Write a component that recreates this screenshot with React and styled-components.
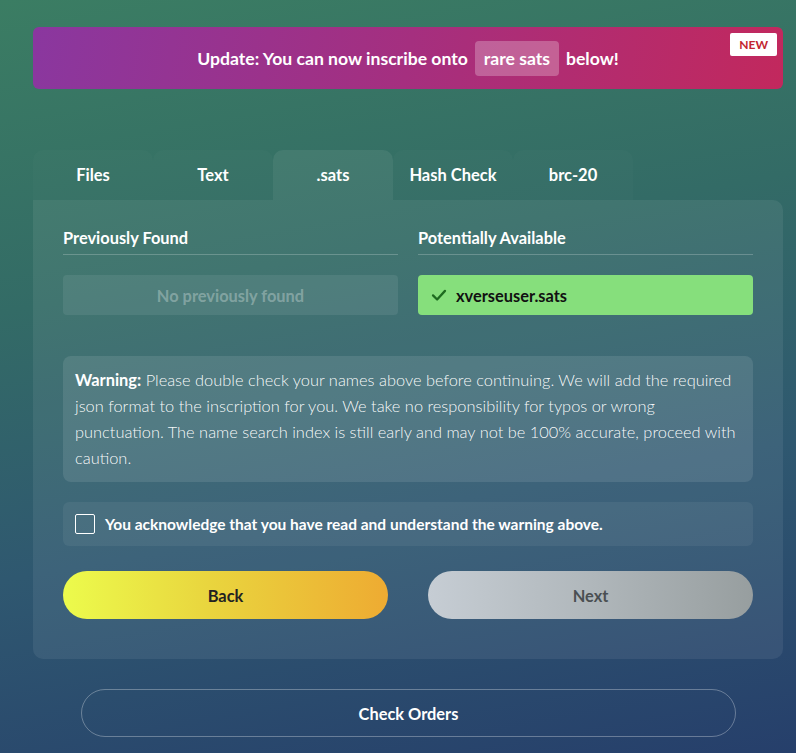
import React from 'react';
import styled, { createGlobalStyle } from 'styled-components';

const GlobalStyle = createGlobalStyle`
	html, body {
		margin: 0;
		padding: 0;
		height: 100%;
	}
	body {
		font-family: Lato, 'Noto Sans', sans-serif;
		background: linear-gradient(170deg, #3b7d63 0%, #336b66 35%, #2f5870 65%, #263f6b 100%);
		color: white;
	}
`;

const Page = styled.div`
	width: 796px;
	height: 753px;
	box-sizing: border-box;
	padding: 27px 13px 0 33px;
	display: flex;
	flex-direction: column;
`;

const Banner = styled.div`
	position: relative;
	height: 62px;
	border-radius: 6px;
	background: linear-gradient(100deg, #8a379f 0%, #a52f7f 50%, #c2285d 100%);
	display: flex;
	align-items: center;
	justify-content: center;
	gap: 7px;
	font-size: 17.6px;
	font-weight: 700;
`;

const Pill = styled.span`
	background: rgba(255, 255, 255, 0.25);
	border-radius: 4px;
	padding: 7px 9px;
`;

const NewBadge = styled.span`
	position: absolute;
	top: 6px;
	right: 6px;
	background: white;
	color: #c3262f;
	font-size: 12px;
	font-weight: 700;
	padding: 4px 9px;
	border-radius: 2px;
`;

const Tabs = styled.div`
	display: flex;
	margin-top: 61px;
`;

const Tab = styled.div`
	width: 120px;
	height: 50px;
	display: flex;
	align-items: center;
	justify-content: center;
	font-size: 16.5px;
	font-weight: 700;
	border-radius: 10px 10px 0 0;
	background: ${(p) => (p.$active ? 'rgba(255,255,255,0.07)' : 'rgba(255,255,255,0.015)')};
`;

const Panel = styled.div`
	background: rgba(255, 255, 255, 0.07);
	border-radius: 0 10px 10px 10px;
	padding: 28px 30px 40px;
	display: flex;
	flex-direction: column;
`;

const Columns = styled.div`
	display: grid;
	grid-template-columns: 1fr 1fr;
	gap: 20px;
`;

const Column = styled.div`
	display: flex;
	flex-direction: column;
`;

const ColTitle = styled.div`
	font-size: 16.4px;
	font-weight: 700;
	padding-bottom: 7px;
	border-bottom: 1px solid rgba(255, 255, 255, 0.22);
	margin-bottom: 20px;
`;

const Result = styled.div`
	height: 40px;
	border-radius: 4px;
	display: flex;
	align-items: center;
	gap: 8px;
	font-size: 16.4px;
	font-weight: 700;
	box-sizing: border-box;
	padding: 0 12px;
	justify-content: ${(p) => (p.$found ? 'flex-start' : 'center')};
	background: ${(p) => (p.$found ? '#86df7c' : 'rgba(255,255,255,0.08)')};
	color: ${(p) => (p.$found ? '#111' : 'rgba(255,255,255,0.3)')};
`;

const Warning = styled.div`
	margin-top: 41px;
	background: rgba(255, 255, 255, 0.1);
	border-radius: 8px;
	padding: 11px 12px;
	font-size: 16.4px;
	font-weight: 300;
	line-height: 26px;
	color: rgba(255, 255, 255, 0.96);

	b {
		font-weight: 700;
		color: white;
	}
`;

const Acknowledge = styled.label`
	margin-top: 20px;
	height: 44px;
	box-sizing: border-box;
	padding: 0 12px;
	display: flex;
	align-items: center;
	gap: 10px;
	background: rgba(255, 255, 255, 0.06);
	border-radius: 6px;
	font-size: 15.5px;
	font-weight: 700;
`;

const Box = styled.span`
	width: 18px;
	height: 18px;
	border: 1px solid white;
	border-radius: 2px;
`;

const Buttons = styled.div`
	margin-top: 25px;
	display: grid;
	grid-template-columns: 1fr 1fr;
	gap: 40px;
`;

const Button = styled.button`
	height: 48px;
	border: none;
	border-radius: 24px;
	font-family: inherit;
	font-size: 16.4px;
	font-weight: 700;
	background: ${(p) =>
		p.$primary
			? 'linear-gradient(90deg, #ecfb4c 0%, #e9d53e 45%, #eeab32 100%)'
			: 'linear-gradient(90deg, #c6cdd4 0%, #b0b7bb 50%, #979e9f 100%)'};
	color: ${(p) => (p.$primary ? '#222' : '#4a4f52')};
`;

const Orders = styled.button`
	margin: 30px 47px 0 48px;
	height: 48px;
	border-radius: 24px;
	background: transparent;
	border: 1px solid rgba(255, 255, 255, 0.3);
	color: white;
	font-family: inherit;
	font-size: 16.4px;
	font-weight: 700;
`;

const Check = () => (
	<svg width="18" height="18" viewBox="0 0 24 24" fill="none" stroke="#1d6b1f" strokeWidth="3" strokeLinecap="round" strokeLinejoin="round">
		<polyline points="4 12.5 9.5 18 20 6.5" />
	</svg>
);

function App() {
	return (
		<>
			<GlobalStyle />
			<Page>
				<Banner>
					Update: You can now inscribe onto <Pill>rare sats</Pill> below!
					<NewBadge>NEW</NewBadge>
				</Banner>
				<Tabs>
					<Tab>Files</Tab>
					<Tab>Text</Tab>
					<Tab $active>.sats</Tab>
					<Tab>Hash Check</Tab>
					<Tab>brc-20</Tab>
				</Tabs>
				<Panel>
					<Columns>
						<Column>
							<ColTitle>Previously Found</ColTitle>
							<Result>No previously found</Result>
						</Column>
						<Column>
							<ColTitle>Potentially Available</ColTitle>
							<Result $found>
								<Check />
								xverseuser.sats
							</Result>
						</Column>
					</Columns>
					<Warning>
						<b>Warning:</b> Please double check your names above before continuing. We will add the required json
						format to the inscription for you. We take no responsibility for typos or wrong punctuation. The name
						search index is still early and may not be 100% accurate, proceed with caution.
					</Warning>
					<Acknowledge>
						<Box />
						You acknowledge that you have read and understand the warning above.
					</Acknowledge>
					<Buttons>
						<Button $primary>Back</Button>
						<Button>Next</Button>
					</Buttons>
				</Panel>
				<Orders>Check Orders</Orders>
			</Page>
		</>
	);
}

export default App;
